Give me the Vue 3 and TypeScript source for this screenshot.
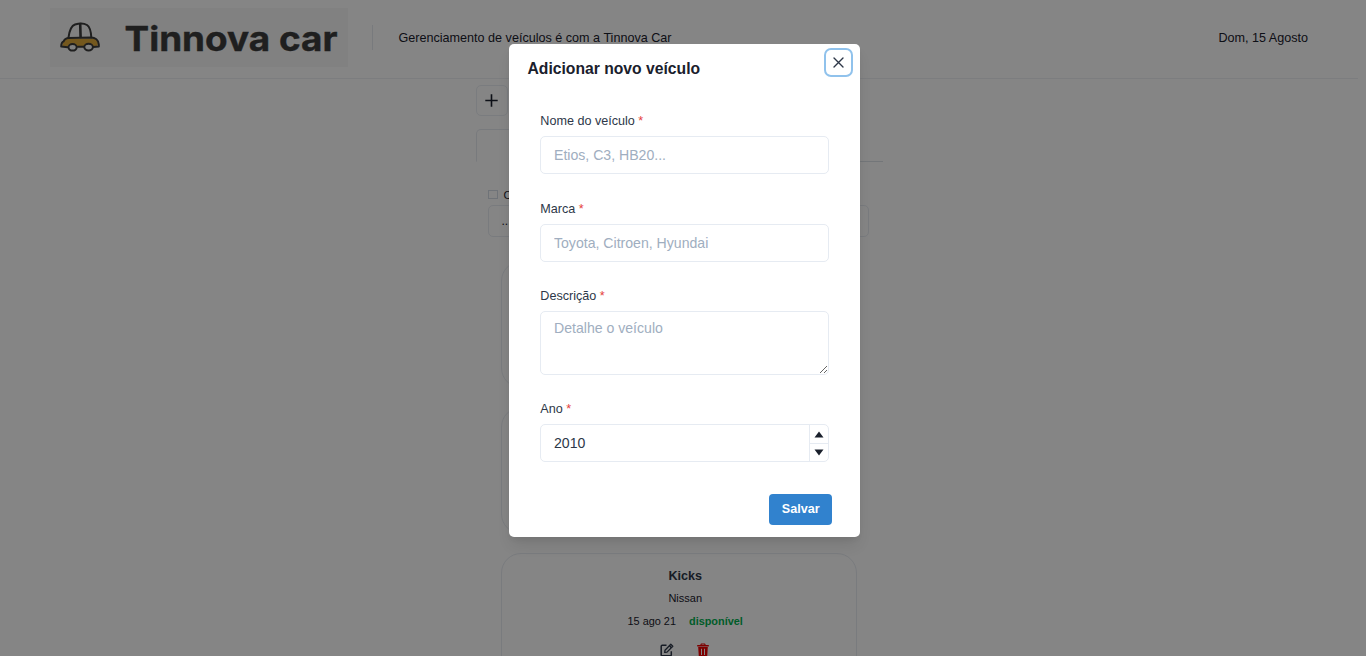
<script setup lang="ts">
import { ref } from 'vue'

interface Vehicle {
  name: string
  brand: string
  date: string
  status: string
}

const vehicles: (Vehicle | null)[] = [
  null,
  null,
  { name: 'Kicks', brand: 'Nissan', date: '15 ago 21', status: 'disponível' },
]

const year = ref('2010')
</script>

<template>
  <div class="screen">
    <div class="page">
      <header class="header">
        <div class="logo">
          <svg class="car" width="40" height="30" viewBox="0 0 40 30" fill="none" stroke="#3c3c3c" stroke-width="2" stroke-linecap="round" stroke-linejoin="round">
            <path d="M5 16.5 L34 16.5 Q38 17.5 38 22 L37 25 L2 25 L3 20 Q4 17.5 5 16.5Z" fill="#dfa93a" stroke="none" />
            <path d="M8.5 15.5 C9.5 8 12 3.5 15 2.5 C19 1.2 24 1.1 27 3 C30 5 31 10 31.3 15.3" />
            <path d="M20.2 2 L20.6 15" stroke-width="2.6" />
            <path d="M8.5 15.9 L31 15.5 C35 15.6 38.5 18 38.8 22.5 L38.8 24.6 L33.5 25" />
            <path d="M8.5 15.9 C5.5 16.3 4.2 17 3.6 19.4 C2 20 1.3 21 1.2 24.6 L7.5 25.2 M18 24.8 L24 24.8" />
            <ellipse cx="12.6" cy="25.3" rx="4.1" ry="3.3" fill="#f8f8f8" />
            <ellipse cx="28.6" cy="25.1" rx="4.3" ry="3.4" fill="#f8f8f8" />
          </svg>
          <svg class="wordmark" width="216" height="46" viewBox="0 0 216 46">
            <text x="0.5" y="35.5" textLength="213" lengthAdjust="spacingAndGlyphs">Tinnova car</text>
          </svg>
        </div>
        <div class="rule"></div>
        <span class="tagline">Gerenciamento de veículos é com a Tinnova Car</span>
        <span class="today">Dom, 15 Agosto</span>
      </header>

      <main class="content">
        <button class="add" aria-label="Adicionar">
          <svg width="13" height="13" viewBox="0 0 13 13"><path d="M6.5 0.3V12.7M0.3 6.5H12.7" stroke="#1a202c" stroke-width="1.6" /></svg>
        </button>
        <div class="tabs"><div class="tab"></div></div>
        <label class="check"><span class="box"></span><span>C</span></label>
        <div class="filter">...</div>
        <section class="cards">
          <article v-for="(v, i) in vehicles" :key="i" class="card">
            <template v-if="v">
              <h3>{{ v.name }}</h3>
              <p class="brand">{{ v.brand }}</p>
              <p class="meta"><span>{{ v.date }}</span><b>{{ v.status }}</b></p>
              <div class="actions">
                <svg width="14" height="14" viewBox="0 0 14 14" fill="none" stroke="#2d3748" stroke-width="1.5" stroke-linejoin="round">
                  <path d="M6.5 2.2H2.2Q1.2 2.2 1.2 3.2V11.8Q1.2 12.8 2.2 12.8H10.3Q11.3 12.8 11.3 11.8V8.2" />
                  <path d="M5 7.2 L10.8 1.3 L12.8 3.2 L7 9.1 L4.7 9.4Z" stroke-width="1.3" /><path d="M9.5 2.7 L11.4 4.6" />
                </svg>
                <svg width="12" height="14" viewBox="0 0 12 14">
                  <path fill="#f00000" fill-rule="evenodd" d="M0.2 2H3.2L4 0.5H8L8.8 2H11.8V3.4H0.2ZM4.5 2H7.5L7.2 1.5H4.8ZM1.2 4H10.8L10.2 13.5H1.8ZM4 5.7V12H5V5.7ZM7 5.7V12H8V5.7Z" />
                </svg>
              </div>
            </template>
          </article>
        </section>
      </main>
    </div>

    <div class="overlay">
      <div class="modal" role="dialog">
        <div class="modal-head">
          <h2>Adicionar novo veículo</h2>
          <button class="close" aria-label="Fechar">
            <svg width="11" height="11" viewBox="0 0 11 11"><path d="M1 1L10 10M10 1L1 10" stroke="#2d3748" stroke-width="1.35" stroke-linecap="round" /></svg>
          </button>
        </div>
        <form class="form" @submit.prevent>
          <div class="field">
            <label>Nome do veículo <i>*</i></label>
            <input type="text" placeholder="Etios, C3, HB20..." />
          </div>
          <div class="field">
            <label>Marca <i>*</i></label>
            <input type="text" placeholder="Toyota, Citroen, Hyundai" />
          </div>
          <div class="field">
            <label>Descrição <i>*</i></label>
            <textarea placeholder="Detalhe o veículo"></textarea>
          </div>
          <div class="field">
            <label>Ano <i>*</i></label>
            <div class="number">
              <input v-model="year" type="text" />
              <div class="stepper">
                <span><svg width="10" height="7" viewBox="0 0 10 7"><path d="M5 .5L9.5 6.5H.5Z" fill="#1a202c" /></svg></span>
                <span><svg width="10" height="7" viewBox="0 0 10 7"><path d="M5 6.5L9.5 .5H.5Z" fill="#1a202c" /></svg></span>
              </div>
            </div>
          </div>
          <button class="save">Salvar</button>
        </form>
      </div>
    </div>
  </div>
</template>

<style>
body {
  overflow: hidden;
}
</style>

<style scoped>
* {
  box-sizing: border-box;
  margin: 0;
}
.screen {
  position: relative;
  width: 1366px;
  height: 656px;
  overflow: hidden;
  background: #fff;
  color: #1a202c;
  font-family: "Liberation Sans", Arial, sans-serif;
}
.page {
  width: 1358px;
}
.header {
  display: flex;
  align-items: center;
  height: 79px;
  padding: 0 50px;
  padding-bottom: 3px;
  border-bottom: 1px solid #edf0f4;
  font-size: 12.6px;
}
.logo {
  display: flex;
  align-items: center;
  width: 298px;
  height: 59px;
  padding-left: 10px;
  background: #f8f8f8;
}
.car {
  margin-top: -1px;
}
.wordmark {
  margin-left: 24px;
}
.wordmark text {
  font: 700 34px "Inter", sans-serif;
  fill: #3c3c3c;
  stroke: #3c3c3c;
  stroke-width: 0.4px;
}
.rule {
  width: 1px;
  height: 25px;
  margin: 0 25.5px 0 24px;
  background: #e6eaef;
}
.today {
  margin-left: auto;
}
.content {
  width: 407px;
  margin: 6px auto 0;
}
.add {
  display: flex;
  align-items: center;
  justify-content: center;
  width: 32px;
  height: 31px;
  padding: 0;
  border: 1px solid #eaeef3;
  border-radius: 5px;
  background: none;
}
.tabs {
  height: 33px;
  margin-top: 13px;
  border-bottom: 1px solid #dde2e9;
}
.tab {
  width: 203px;
  height: 33px;
  border: 1px solid #e6eaf0;
  border-bottom-color: #fff;
  border-radius: 5px 5px 0 0;
}
.check {
  display: flex;
  align-items: center;
  gap: 6px;
  height: 15px;
  margin: 25px 12px 3px;
  font-size: 11px;
}
.box {
  width: 10px;
  height: 9px;
  border: 1px solid #d5dce6;
}
.filter {
  height: 32px;
  margin: 0 13.5px 0 12px;
  padding: 8px 13px;
  border: 1px solid #e8ecf2;
  border-radius: 5px;
  font-size: 12px;
}
.cards {
  display: grid;
  grid-auto-rows: 127px;
  gap: 19px;
  width: 356px;
  margin: 24px auto 0;
}
.card {
  padding: 14px 0 0 12.4px;
  border: 1px solid #e8ecf2;
  border-radius: 20px;
  text-align: center;
}
.card h3 {
  font-size: 12.6px;
  line-height: 16px;
  color: #2d3748;
}
.brand {
  margin-top: 7px;
  font-size: 11px;
  line-height: 14px;
}
.meta {
  display: flex;
  justify-content: center;
  gap: 13px;
  margin-top: 9px;
  font-size: 10.9px;
  line-height: 14px;
}
.meta b {
  color: #00b050;
}
.actions {
  display: flex;
  justify-content: center;
  gap: 23px;
  margin: 15px 1px 0 0;
}
.overlay {
  position: absolute;
  inset: 0;
  padding-top: 44px;
  background: rgba(0, 0, 0, 0.48);
}
.modal {
  width: 351px;
  height: 493.4px;
  margin-left: 509px;
  border-radius: 5px;
  background: #fff;
  box-shadow: 0 10px 15px -3px rgba(0, 0, 0, 0.1), 0 4px 6px -2px rgba(0, 0, 0, 0.05);
}
.modal-head {
  display: flex;
  justify-content: space-between;
  height: 69px;
  padding: 6.4px 9px 0 18.5px;
}
h2 {
  margin-top: 8.6px;
  font-size: 15.7px;
  line-height: 20px;
}
.close {
  display: flex;
  align-items: center;
  justify-content: center;
  width: 25px;
  height: 25px;
  margin-right: 0;
  padding: 0;
  border: 0;
  border-radius: 5px;
  background: #fff;
  box-shadow: 0 0 0 2px #90c2ec;
}
.form {
  padding: 0 31.3px;
}
.field {
  margin-bottom: 26.7px;
}
.field label {
  display: block;
  height: 23px;
  font-size: 12.6px;
  line-height: 16px;
  color: #2d3748;
}
.field i {
  font-style: normal;
  color: #e53e3e;
}
input,
textarea {
  display: block;
  width: 288.5px;
  height: 38px;
  padding: 0 12.7px;
  border: 1px solid #e6ebf2;
  border-radius: 5px;
  outline: none;
  background: transparent;
  color: #2d3748;
  font: 14.1px "Liberation Sans", Arial, sans-serif;
}
textarea {
  height: 63.3px;
  padding-top: 8px;
}
::placeholder {
  color: #a0aec0;
}
.number {
  display: flex;
  position: relative;
}
.stepper {
  position: absolute;
  top: 1px;
  left: 268.5px;
  width: 19px;
  height: 36px;
  border-left: 1px solid #e6ebf2;
}
.stepper span {
  display: flex;
  align-items: center;
  justify-content: center;
  height: 18px;
}
.stepper span + span {
  border-top: 1px solid #e6ebf2;
}
.save {
  display: block;
  width: 63px;
  height: 31px;
  margin: 31.5px -3.5px 0 auto;
  padding: 0;
  border: 0;
  border-radius: 4px;
  background: #3182ce;
  color: #fff;
  font: 700 12.6px "Liberation Sans", Arial, sans-serif;
}
</style>
